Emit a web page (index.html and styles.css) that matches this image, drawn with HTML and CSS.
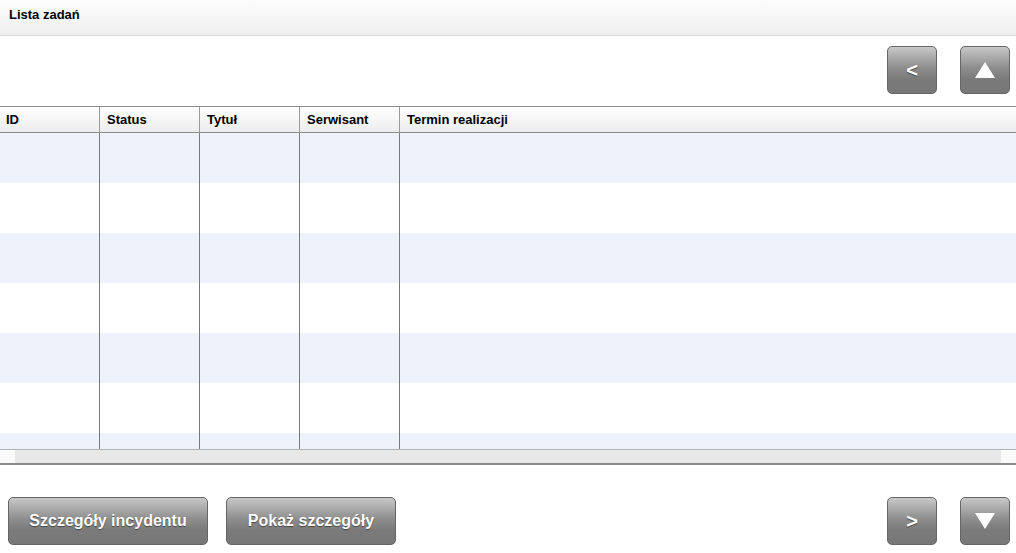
FILE: index.html
```html
<!DOCTYPE html>
<html lang="pl">

<head>
    <meta charset="UTF-8">
    <meta name="viewport" content="width=device-width, initial-scale=1.0">
    <title>Lista zadań</title>
    <link rel="stylesheet" href="styles.css">
</head>

<body>
    <!--title bar-->
    <div class="title-bar">Lista zadań</div>

    <!--top buttons-->
    <div class="top-tools">
        <a href="javascript:;" class="btn btn-sq btn-arrow">&lt;</a>
        <a href="javascript:;" class="btn btn-sq">
            <svg width="20" height="16" viewBox="0 0 20 16"><polygon points="10,0 20,16 0,16" fill="#fff"/></svg>
        </a>
    </div>

    <!--task table-->
    <div class="grid">
        <div class="grid-head">
            <div class="cell">ID</div>
            <div class="cell">Status</div>
            <div class="cell">Tytuł</div>
            <div class="cell">Serwisant</div>
            <div class="cell last">Termin realizacji</div>
        </div>
        <div class="grid-body">
            <div class="row odd"><div class="cell"></div><div class="cell"></div><div class="cell"></div><div class="cell"></div><div class="cell last"></div></div>
            <div class="row"><div class="cell"></div><div class="cell"></div><div class="cell"></div><div class="cell"></div><div class="cell last"></div></div>
            <div class="row odd"><div class="cell"></div><div class="cell"></div><div class="cell"></div><div class="cell"></div><div class="cell last"></div></div>
            <div class="row"><div class="cell"></div><div class="cell"></div><div class="cell"></div><div class="cell"></div><div class="cell last"></div></div>
            <div class="row odd"><div class="cell"></div><div class="cell"></div><div class="cell"></div><div class="cell"></div><div class="cell last"></div></div>
            <div class="row"><div class="cell"></div><div class="cell"></div><div class="cell"></div><div class="cell"></div><div class="cell last"></div></div>
            <div class="row odd"><div class="cell"></div><div class="cell"></div><div class="cell"></div><div class="cell"></div><div class="cell last"></div></div>
        </div>
        <!--horizontal scrollbar-->
        <div class="hscroll">
            <span class="hs-end"></span>
            <span class="hs-track"></span>
            <span class="hs-end"></span>
        </div>
    </div>

    <!--bottom buttons-->
    <div class="bottom-tools">
        <a href="javascript:;" class="btn btn-wide">Szczegóły incydentu</a>
        <a href="javascript:;" class="btn btn-mid">Pokaż szczegóły</a>
        <span class="spacer"></span>
        <a href="javascript:;" class="btn btn-sq btn-arrow">&gt;</a>
        <a href="javascript:;" class="btn btn-sq">
            <svg width="20" height="16" viewBox="0 0 20 16"><polygon points="0,0 20,0 10,16" fill="#fff"/></svg>
        </a>
    </div>
</body>

</html>
```

FILE: styles.css
```css
* {
    margin: 0;
    padding: 0;
    box-sizing: border-box;
}

body {
    width: 1016px;
    height: 553px;
    overflow: hidden;
    background: #fff;
    font-family: "Liberation Sans", Arial, sans-serif;
    color: #000;
}

.title-bar {
    height: 36px;
    padding: 7px 9px 0;
    font-size: 13px;
    font-weight: bold;
    background: linear-gradient(#fdfdfd, #eeeeee);
    border-bottom: 1px solid #d8d8d8;
}

.top-tools {
    display: flex;
    justify-content: flex-end;
    gap: 23px;
    height: 70px;
    padding: 10px 6px 0 0;
}

.btn {
    display: flex;
    align-items: center;
    justify-content: center;
    height: 48px;
    border: 1px solid #666;
    border-radius: 5px;
    background: linear-gradient(#c8c8c8 0%, #8e8e8e 45%, #7a7a7a 70%, #787878 100%);
    color: #fff;
    font-size: 16px;
    font-weight: bold;
    text-decoration: none;
    text-shadow: 0 1px 1px #444;
    user-select: none;
}

.btn-sq {
    width: 50px;
}

.btn-arrow {
    font-size: 20px;
}

.btn-wide {
    width: 200px;
}

.btn-mid {
    width: 170px;
}

/*table*/
.grid {
    border-top: 1px solid #8c8c8c;
}

.grid-head {
    display: flex;
    height: 26px;
    background: linear-gradient(#ffffff, #ececec);
    border-bottom: 1px solid #8c8c8c;
}

.cell {
    width: 100px;
    flex-shrink: 0;
    border-right: 1px solid #7a7a7a;
}

.cell.last {
    flex: 1;
    border-right: none;
}

.grid-head .cell {
    padding: 5px 6px 0 7px;
    font-size: 13px;
    font-weight: bold;
    border-right-color: #9a9a9a;
}

.grid-head .cell:first-child {
    padding-left: 6px;
}

.grid-body {
    height: 316px;
    overflow: hidden;
}

.row {
    display: flex;
    height: 50px;
    background: #fff;
}

.row.odd {
    background: #eef2fa;
}

.hscroll {
    display: flex;
    height: 16px;
    border-top: 1px solid #b4b4b4;
    border-bottom: 2px solid #8a8a8a;
}

.hs-end {
    width: 15px;
    background: #fafafa;
}

.hs-track {
    flex: 1;
    background: #e8e8e8;
}

.bottom-tools {
    display: flex;
    gap: 18px;
    padding: 32px 6px 0 8px;
}

.bottom-tools .spacer {
    flex: 1;
}

.bottom-tools .btn-sq + .btn-sq {
    margin-left: 5px;
}
```
